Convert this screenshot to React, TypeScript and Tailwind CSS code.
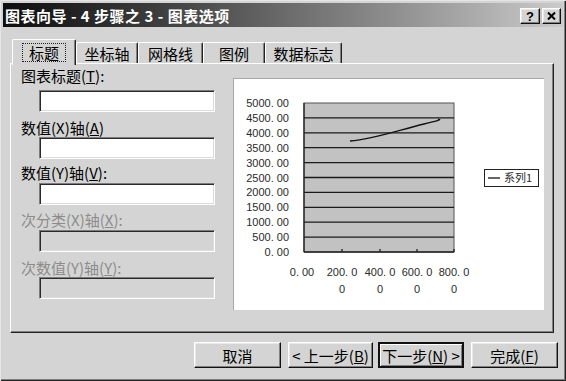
import type { ReactNode } from 'react';

const font = { fontFamily: '"Noto Sans CJK SC", "Liberation Sans", sans-serif' };

const raised =
  'border border-t-white border-l-white border-r-[#111] border-b-[#111] shadow-[inset_-1px_-1px_0_#808080,inset_1px_1px_0_#e8e8e8]';
const sunken =
  'border border-t-[#7c7c7c] border-l-[#7c7c7c] border-r-white border-b-white shadow-[inset_1px_1px_0_#2a2a2a,inset_-1px_-1px_0_#dcdcdc]';

function Label({ children, disabled, className }: { children: ReactNode; disabled?: boolean; className?: string }) {
  return (
    <div className={`h-[16px] ml-[9px] text-[15px] leading-[16px] whitespace-nowrap ${disabled ? 'text-[#8c8c8c]' : 'text-black'} ${className ?? ''}`}>
      {children}
    </div>
  );
}

function Field({ disabled, className }: { disabled?: boolean; className?: string }) {
  return <div className={`ml-[27px] w-[176px] h-[22px] ${sunken} ${disabled ? 'bg-[#d4d4d4]' : 'bg-white'} ${className ?? ''}`} />;
}

function Chart() {
  const top = 24;
  const bottom = 173;
  const step = (bottom - top) / 10;
  const ys = Array.from({ length: 11 }, (_, i) => top + i * step);
  const yLabels = ['5000. 00', '4500. 00', '4000. 00', '3500. 00', '3000. 00', '2500. 00', '2000. 00', '1500. 00', '1000. 00', '500. 00', '0. 00'];
  const ticks = [108, 146, 183, 220];
  return (
    <svg width="311" height="232" className="block" style={{ fontFamily: '"Liberation Sans", sans-serif' }}>
      <rect x="70" y={top} width="150" height={bottom - top} fill="#c2c2c2" stroke="#555" strokeWidth="1" />
      {ys.slice(1, 10).map((y) => (
        <line key={y} x1="70" x2="220" y1={y} y2={y} stroke="#1a1a1a" strokeWidth="1.3" />
      ))}
      <line x1="70" x2="70" y1={top} y2={bottom} stroke="#222" strokeWidth="1.3" />
      <line x1="70" x2="220" y1={bottom} y2={bottom} stroke="#222" strokeWidth="1.3" />
      {ticks.map((x) => (
        <line key={x} x1={x} x2={x} y1={bottom} y2={bottom - 3} stroke="#222" strokeWidth="1.3" />
      ))}
      {yLabels.map((t, i) => (
        <text key={t} x="55" y={ys[i] + 4} fontSize="11" fill="#2a2a2a" textAnchor="end">
          {t}
        </text>
      ))}
      <text x="68" y="197" fontSize="11" fill="#2a2a2a" textAnchor="middle">0. 00</text>
      {['200. 0', '400. 0', '600. 0', '800. 0'].map((t, i) => (
        <g key={t}>
          <text x={ticks[i]} y="197" fontSize="11" fill="#2a2a2a" textAnchor="middle">{t}</text>
          <text x={ticks[i]} y="214" fontSize="11" fill="#2a2a2a" textAnchor="middle">0</text>
        </g>
      ))}
      <path d="M116 62 C140 60 165 51 190 45 S202 41 205 40" fill="none" stroke="#111" strokeWidth="1.3" />
      <rect x="250.5" y="90.5" width="54" height="17" fill="white" stroke="#222" strokeWidth="1" />
      <line x1="254" x2="266" y1="99" y2="99" stroke="#111" strokeWidth="1.3" />
      <text x="270" y="103" fontSize="11" fill="#2a2a2a" style={font}>系列1</text>
    </svg>
  );
}

export default function App() {
  const tabs = [
    { name: '标题', w: 'w-[62px]' },
    { name: '坐标轴', w: 'w-[62px]' },
    { name: '网格线', w: 'w-[65px]' },
    { name: '图例', w: 'w-[62px]' },
    { name: '数据标志', w: 'w-[77px]' },
  ];

  return (
    <div
      className="w-[566px] h-[381px] bg-[#d4d4d4] p-[3px] flex flex-col shadow-[inset_1px_1px_0_#e6e6e6,inset_-1px_-1px_0_#222,inset_-2px_-2px_0_#808080]"
      style={font}
    >
      {/* Title bar */}
      <div className="h-[24px] flex items-center pl-[2px] pr-[2px] bg-gradient-to-r from-[#0e0e0e] via-[#6a6a6a] to-[#cbcbcb]">
        <span className="text-white font-bold text-[15px] leading-none tracking-[0.5px] whitespace-pre">图表向导 - 4 步骤之 3 - 图表选项</span>
        <div className="ml-auto flex gap-[2px] mt-[2px]">
          <div className={`w-[20px] h-[16px] bg-[#d4d4d4] ${raised} flex items-center justify-center text-[13px] font-bold leading-none`} style={{ fontFamily: '"Liberation Sans", sans-serif' }}>?</div>
          <div className={`w-[19px] h-[16px] bg-[#d4d4d4] ${raised} flex items-center justify-center`}>
            <svg width="9" height="8" viewBox="0 0 9 8">
              <path d="M1 0.5 L8 7.5 M8 0.5 L1 7.5" stroke="black" strokeWidth="2" />
            </svg>
          </div>
        </div>
      </div>

      {/* Body */}
      <div className="flex flex-col pl-[7px] pt-[12px]">
        {/* Tabs */}
        <div className="flex items-end h-[24px] ml-[2px]">
          {tabs.map((t, i) =>
            i === 0 ? (
              <div
                key={t.name}
                className="relative z-10 h-[26px] -mb-[2px] w-[64px] bg-[#d4d4d4] border-l border-t border-r border-t-white border-l-white border-r-[#222] rounded-t-[2px] shadow-[inset_-1px_0_0_#808080] flex justify-center pt-[3px]"
              >
                <div className="h-[19px] px-[6px] border border-dotted border-[#222] text-[15px] leading-[17px]">{t.name}</div>
              </div>
            ) : (
              <div
                key={t.name}
                className={`h-[21px] ${t.w} bg-[#d4d4d4] border-l border-t border-r border-t-white border-l-white border-r-[#222] rounded-t-[2px] shadow-[inset_-1px_0_0_#808080] flex justify-center pt-[2px] text-[15px] leading-[17px]`}
              >
                {t.name}
              </div>
            )
          )}
        </div>

        {/* Panel */}
        <div className="w-[544px] h-[270px] border border-t-white border-l-white border-r-[#222] border-b-[#222] shadow-[inset_-1px_-1px_0_#808080] flex p-[1px]">
          <div className="flex flex-col w-[203px]">
            <Label className="mt-[3px]">
              图表标题(<span className="underline">T</span>):
            </Label>
            <Field className="mt-[6px]" />
            <Label className="mt-[8px]">
              数值(X)轴(<span className="underline">A</span>)
            </Label>
            <Field className="mt-[1px]" />
            <Label className="mt-[6px]">
              数值(Y)轴(<span className="underline">V</span>):
            </Label>
            <Field className="mt-[2px]" />
            <Label disabled className="mt-[7px]">
              次分类(X)轴(<span className="underline">X</span>):
            </Label>
            <Field disabled className="mt-[2px]" />
            <Label disabled className="mt-[8px]">
              次数值(Y)轴(<span className="underline">Y</span>):
            </Label>
            <Field disabled className="mt-[1px]" />
          </div>
          <div className="ml-[18px] mt-[13px] w-[311px] h-[232px] bg-white border-t border-l border-[#a8a8a8]">
            <Chart />
          </div>
        </div>

        {/* Buttons */}
        <div className="flex justify-end pr-[5px] mt-[9px]">
          <button className={`w-[87px] h-[26px] bg-[#d4d4d4] ${raised} text-[15px] leading-none mr-[7px]`}>取消</button>
          <button className={`w-[85px] h-[26px] bg-[#d4d4d4] ${raised} text-[15px] leading-none mr-[5px] whitespace-nowrap`}>
            &lt; 上一步(<span className="underline">B</span>)
          </button>
          <button className="w-[86px] h-[26px] bg-[#d4d4d4] border-2 border-[#111] shadow-[inset_1px_1px_0_white,inset_-1px_-1px_0_#808080] text-[15px] leading-none mr-[7px] whitespace-nowrap">
            下一步(<span className="underline">N</span>) &gt;
          </button>
          <button className={`w-[87px] h-[26px] bg-[#d4d4d4] ${raised} text-[15px] leading-none whitespace-nowrap`}>
            完成(<span className="underline">F</span>)
          </button>
        </div>
      </div>
    </div>
  );
}
